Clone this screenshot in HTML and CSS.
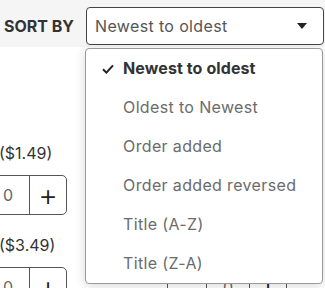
FILE: index.html
```html
<!DOCTYPE html>
<html lang="en">
<head>
  <meta charset="UTF-8">
  <meta name="viewport" content="width=device-width, initial-scale=1.0">
  <title>Shop</title>
  <link rel="stylesheet" href="styles.css">
</head>
<body>
  <!-- Barra de orden -->
  <header class="sort-bar">
    <span class="sort-label">SORT BY</span>
    <div class="sort-select">
      <div class="select-box">
        <span>Newest to oldest</span>
        <svg class="caret" width="10" height="6" viewBox="0 0 10 6"><path d="M0 0h10L5 6z" fill="#222"/></svg>
      </div>
      <ul class="sort-menu">
        <li class="active">
          <svg class="check" width="12" height="10" viewBox="0 0 12 10"><path d="M1 5.2l3.4 3.4L11 1.4" fill="none" stroke="#222" stroke-width="2"/></svg>
          Newest to oldest
        </li>
        <li>Oldest to Newest</li>
        <li>Order added</li>
        <li>Order added reversed</li>
        <li>Title (A-Z)</li>
        <li>Title (Z-A)</li>
      </ul>
    </div>
  </header>

  <!-- Productos -->
  <main class="products">
    <div class="product">
      <p class="price">($1.49)</p>
      <div class="stepper"><span class="minus">&minus;</span><span class="qty">0</span><span class="plus">+</span></div>
    </div>
    <div class="product">
      <p class="price">($2.99)</p>
      <div class="stepper"><span class="minus">&minus;</span><span class="qty">0</span><span class="plus">+</span></div>
    </div>
    <div class="product">
      <p class="price">($3.49)</p>
      <div class="stepper"><span class="minus">&minus;</span><span class="qty">0</span><span class="plus">+</span></div>
    </div>
    <div class="product">
      <p class="price">($1.99)</p>
      <div class="stepper"><span class="minus">&minus;</span><span class="qty">0</span><span class="plus">+</span></div>
    </div>
  </main>
</body>
</html>
```

FILE: styles.css
```css
body {
  margin: 0;
  font-family: Inter, "Noto Sans", sans-serif;
  background-color: #fff;
  color: #333;
  overflow: hidden;
}
.sort-bar {
  display: flex;
  align-items: center;
  gap: 12px;
  height: 47px;
  padding: 5px 0 0 4px;
  box-sizing: border-box;
  background-color: #f5f5f6;
}
.sort-label {
  font-size: 16px;
  font-weight: 700;
  color: #333;
}
.sort-select {
  position: relative;
}
.select-box {
  display: flex;
  align-items: center;
  justify-content: space-between;
  width: 238px;
  height: 38px;
  box-sizing: border-box;
  padding: 0 16px 0 8px;
  border: 1px solid #444;
  border-radius: 4px;
  background-color: #fff;
  font-size: 16px;
  letter-spacing: 0.35px;
  color: #555;
}
.sort-menu {
  position: absolute;
  top: 41px;
  left: -1px;
  width: 238px;
  box-sizing: border-box;
  margin: 0;
  padding: 0;
  list-style: none;
  background-color: #fff;
  border: 1px solid #999;
  border-radius: 4px;
  box-shadow: 0 2px 12px rgba(0, 0, 0, 0.15);
  z-index: 2;
}
.sort-menu li {
  position: relative;
  height: 39px;
  line-height: 39px;
  padding-left: 37px;
  font-size: 16px;
  letter-spacing: 0.35px;
  color: #6b6b6b;
}
.sort-menu li.active {
  font-weight: 700;
  letter-spacing: 0.1px;
  color: #333;
}
.check {
  position: absolute;
  left: 16px;
  top: 15px;
}
.products {
  display: grid;
  grid-template-columns: 120px 120px;
  column-gap: 100px;
  row-gap: 20px;
  margin-left: -53px;
  padding-top: 96px;
}
.price {
  margin: 0 0 12px;
  padding-left: 52px;
  font-size: 16px;
  line-height: 20px;
  color: #333;
}
.stepper {
  display: flex;
  height: 40px;
  box-sizing: border-box;
  border: 1px solid #555;
  border-radius: 5px;
}
.stepper span {
  display: flex;
  align-items: center;
  justify-content: center;
}
.minus {
  width: 38px;
  font-size: 24px;
  color: #bbb;
}
.qty {
  width: 42px;
  border-left: 1px solid #555;
  font-size: 16px;
  color: #666;
}
.plus {
  flex: 1;
  border-left: 1px solid #555;
  font-size: 30px;
  font-weight: 300;
  color: #222;
}
```
